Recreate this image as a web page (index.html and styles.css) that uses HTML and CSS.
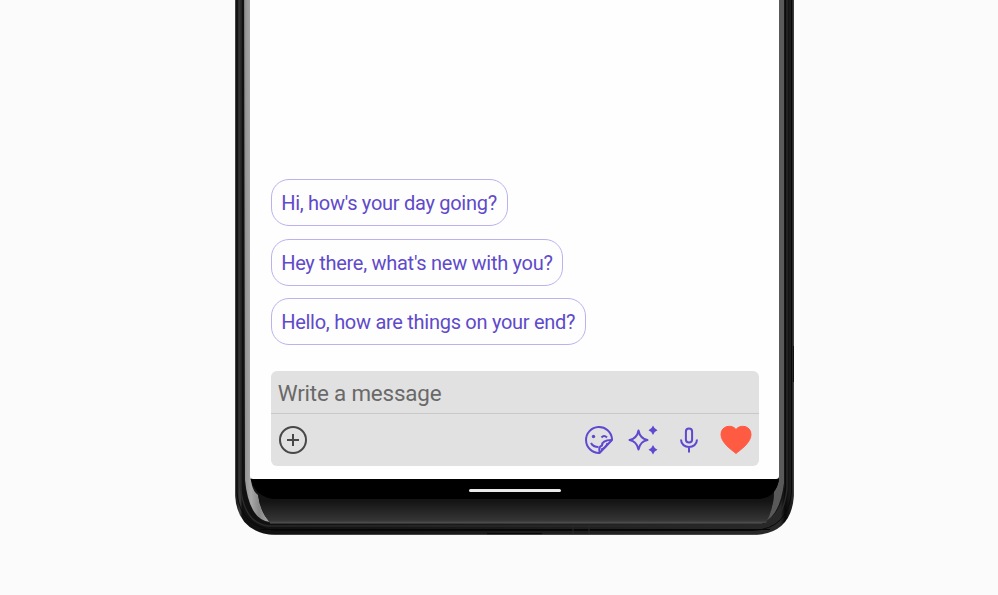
FILE: index.html
```
<!DOCTYPE html>
<html lang="en">
<head>
<meta charset="utf-8">
<title>Messages</title>
<link rel="stylesheet" href="styles.css">
</head>
<body>
<main class="phone">
  <svg class="shell" viewBox="235 0 560 536" aria-hidden="true">
    <defs>
      <linearGradient id="side" gradientUnits="userSpaceOnUse" x1="235" y1="0" x2="794" y2="0">
        <stop offset="0" stop-color="#555"/><stop offset=".003" stop-color="#171717"/>
        <stop offset=".009" stop-color="#3d3d3d"/><stop offset=".013" stop-color="#101010"/>
        <stop offset=".5" stop-color="#1c1c1c"/><stop offset=".976" stop-color="#292929"/>
        <stop offset=".984" stop-color="#080808"/><stop offset=".992" stop-color="#191919"/>
        <stop offset=".997" stop-color="#222"/><stop offset="1" stop-color="#4a4a4a"/>
      </linearGradient>
      <linearGradient id="chin" x1="0" y1="0" x2="0" y2="1">
        <stop offset="0" stop-color="#101010"/><stop offset=".5" stop-color="#141414"/>
        <stop offset=".94" stop-color="#353535"/><stop offset="1" stop-color="#484b49"/>
      </linearGradient>
      <linearGradient id="left" gradientUnits="userSpaceOnUse" x1="243" y1="0" x2="270" y2="0">
        <stop offset="0" stop-color="#606060"/><stop offset=".1" stop-color="#969696"/>
        <stop offset=".3" stop-color="#a8a8a8"/><stop offset=".6" stop-color="#888"/><stop offset="1" stop-color="#aaa"/>
      </linearGradient>
    </defs>
    <path d="M235 0H794V496Q791 535 752 535H275Q238 533 235 496Z" fill="url(#side)"/>
    <path d="M237 0V493Q240 527 276 530.500H753Q788 529 791.500 492V0" fill="none" stroke="#090909"/>
    <path d="M240.500 0V487Q244 523 268 526H760Q784 523 787 488V0" fill="none" stroke="#292929" stroke-width="1.500"/>
    <path d="M243.500 0H785V486Q780 523 754 523H271Q248 521 243.500 477Z" fill="#151515"/>
    <path d="M244 0H251V479Q252 491 258 495Q260 512 270 522Q249 520 245 480Z" fill="url(#left)"/>
    <path d="M779 0H784V483Q780 515 764 522Q774 508 774 491Q778 486 779 479Z" fill="#595959"/>
    <path d="M251 479H779Q778 486 774 491Q774 508 766 523H270Q260 511 258 494Q252 487 251 479Z" fill="url(#chin)"/>
    <path d="M250.500 479H779Q776 499 757 499H273Q256 497 250.500 479Z" fill="#000"/>
    <path d="M270 523H762" stroke="#505350"/>
    <path d="M260 529.500H770" stroke="#060606"/>
    <path d="M487 534H542" stroke="#080808" stroke-width="2"/>
    <path d="M573 525V534M589 525V534" stroke="#292929"/>
    <path d="M272 534.500H755" stroke="#555" opacity=".7"/>
    <path d="M793.500 346V382" stroke="#111"/>
  </svg>
  <section class="screen">
    <div class="suggestions">
      <button class="chip chip-day">Hi, how's your day going?</button>
      <button class="chip chip-new">Hey there, what's new with you?</button>
      <button class="chip chip-things">Hello, how are things on your end?</button>
    </div>
    <div class="composer">
      <div class="message">Write a message</div>
      <div class="tools">
        <svg class="icon-add" viewBox="0 0 30 30"><circle cx="15" cy="15" r="13"/><path d="M15 9V21M9 15H21"/></svg>
        <svg class="icon-sticker" viewBox="0 0 30 30">
          <path d="M15 28A13 13 0 1 1 28 14V15L15.500 28Z"/>
          <path d="M15.500 27C14.500 22 16 21 18 20.500C18 17 21 15 27.500 15M17 24.500Q22 23 23.500 18"/>
          <path d="M7 18Q9 22 14.500 22M17.500 12.500Q20 9.500 23 12.500"/>
          <circle class="eye" cx="9.500" cy="11.500" r="1.700"/>
        </svg>
        <svg class="icon-stars" viewBox="0 0 32 30">
          <path d="M11.500 5.500Q13 13.500 20.500 15Q13 16.500 11.500 24.500Q10 16.500 2.500 15Q10 13.500 11.500 5.500Z"/>
          <path class="spark" d="M26 .5Q27.200 4 30.500 5.200Q27.200 6.500 26 10Q24.800 6.500 21.500 5.200Q24.800 4 26 .5ZM26 20Q27.200 23.500 30.500 24.700Q27.200 26 26 29.500Q24.800 26 21.500 24.700Q24.800 23.500 26 20Z"/>
        </svg>
        <svg class="icon-mic" viewBox="0 0 20 28"><rect x="6.900" y="2.500" width="6.200" height="14" rx="3.100"/><path d="M2 13.500C2 23.500 18 23.500 18 13.500M10 21V26.500"/></svg>
        <svg class="icon-heart" viewBox="0 0 32 30"><path d="M16 28.500C12 25 1 18 1 9.500C1 .5 12-1 16 4.500C20-1 31 .5 31 9.500C31 18 20 25 16 28.500Z"/></svg>
      </div>
    </div>
  </section>
  <div class="navigation"><div class="home-bar"></div></div>
</main>
</body>
</html>
```
FILE: styles.css
```
* { box-sizing: border-box; }
body { margin: 0; height: 595px; overflow: hidden; background: #fbfbfb; font-family: Roboto, sans-serif; }
.phone { position: relative; width: 560px; height: 536px; margin-left: 235px; padding: 0 16px 0 15.4px; }
.shell { position: absolute; inset: 0; width: 560px; height: 536px; }
.screen { position: relative; height: 479px; display: flex; flex-direction: column; justify-content: flex-end; padding: 0 20.5px 13px 20.3px; background: #fefefe; border-radius: 0 0 3px 3px; }
.suggestions { display: flex; flex-direction: column; align-items: flex-start; gap: 12.4px; margin-bottom: 25.5px; }
.chip { height: 47px; padding: 2px 0 0 9.5px; border: 1px solid #bcb1ee; border-radius: 18px; background: #fefefe; color: #5e4aca; font: 20px/43px Roboto, sans-serif; letter-spacing: -.28px; text-align: left; white-space: nowrap; }
.chip-day { width: 237px; }
.chip-new { width: 292px; }
.chip-things { width: 315px; }
.composer { height: 95.5px; border-radius: 6px; background: #e1e1e1; }
.message { height: 43.5px; padding-left: 7px; border-bottom: 1px solid #c8c8c8; color: #696969; font-size: 22.4px; letter-spacing: -.18px; line-height: 45px; }
.tools { height: 52px; display: flex; align-items: center; padding: 0 7px 0 7px; }
.tools svg { fill: none; stroke: #5f49cf; stroke-width: 2; stroke-linejoin: round; flex-shrink: 0; }
.tools .icon-add { width: 30px; height: 30px; margin-right: auto; stroke: #484848; }
.icon-sticker { width: 30px; height: 30px; margin-right: 13px; }
.icon-sticker .eye, .icon-stars .spark { fill: #5f49cf; stroke: none; }
.icon-stars { width: 32px; height: 30px; margin-right: 20px; }
.icon-mic { width: 20px; height: 28px; margin-right: 21px; }
.tools .icon-heart { width: 32px; height: 30px; fill: #ff5a42; stroke: #ff5a42; stroke-width: 1; }
.navigation { position: relative; height: 22px; display: flex; align-items: center; justify-content: center; }
.home-bar { width: 92px; height: 3px; border-radius: 2px; background: #e8e8e8; }
```
